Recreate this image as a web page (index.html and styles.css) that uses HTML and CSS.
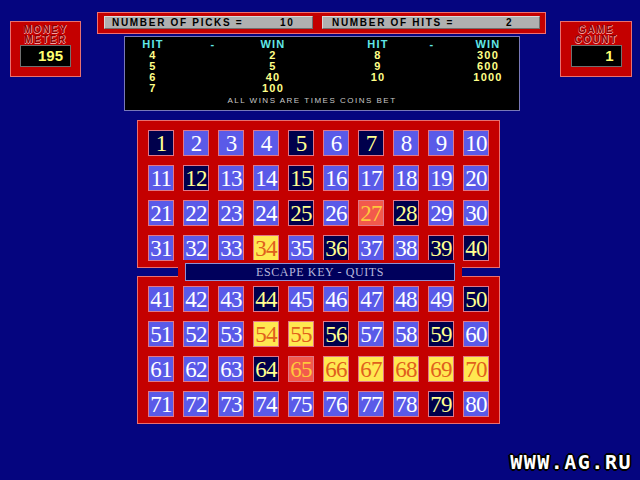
FILE: index.html
```html
<!DOCTYPE html>
<html>
<head>
<meta charset="utf-8">
<link rel="stylesheet" href="styles.css">
</head>
<body>
<div class="screen">
  <div class="top">
    <div class="meter">
      <div class="meter-label">MONEY<br>METER</div>
      <div class="meter-display">195</div>
    </div>
    <div class="center">
      <div class="status">
        <div class="status-panel picks"><span class="status-label">NUMBER OF PICKS =</span><span class="status-val">10</span></div>
        <div class="status-panel hits"><span class="status-label">NUMBER OF HITS =</span><span class="status-val">2</span></div>
      </div>
      <div class="paytable">
        <div class="pay-groups">
          <div class="pay-group left">
            <span class="ph">HIT</span><span class="ph">-</span><span class="ph">WIN</span>
            <span>4</span><span></span><span>2</span>
            <span>5</span><span></span><span>5</span>
            <span>6</span><span></span><span>40</span>
            <span>7</span><span></span><span>100</span>
          </div>
          <div class="pay-group right">
            <span class="ph">HIT</span><span class="ph">-</span><span class="ph">WIN</span>
            <span>8</span><span></span><span>300</span>
            <span>9</span><span></span><span>600</span>
            <span>10</span><span></span><span>1000</span>
          </div>
        </div>
        <div class="pay-note">ALL WINS ARE TIMES COINS BET</div>
      </div>
    </div>
    <div class="meter game">
      <div class="meter-label">GAME<br>COUNT</div>
      <div class="meter-display">1</div>
    </div>
  </div>
  <div class="board">
    <div class="panel" id="p1"></div>
    <div class="panel" id="p2"></div>
    <div class="escape"><div class="escape-bar">ESCAPE KEY - QUITS</div></div>
  </div>
  <div class="watermark">WWW.AG.RU</div>
</div>
<script src="app.js"></script>
</body>
</html>
```
FILE: app.js
```js
var dark = [1,5,7,12,15,25,28,36,39,40,44,50,56,59,64,79];
var yellow = [34,54,55,66,67,68,69,70];
var red = [27,65];
function fill(id, from) {
  var p = document.getElementById(id);
  for (var n = from; n < from + 40; n++) {
    var c = document.createElement('div');
    c.className = 'cell' + (dark.indexOf(n) >= 0 ? ' dark' : yellow.indexOf(n) >= 0 ? ' hit' : red.indexOf(n) >= 0 ? ' hot' : '');
    c.textContent = n;
    p.appendChild(c);
  }
}
fill('p1', 1);
fill('p2', 41);
```
FILE: styles.css
```css
html, body {
  margin: 0;
  padding: 0;
  background: #05057f;
}
.screen {
  position: relative;
  width: 640px;
  height: 480px;
  overflow: hidden;
  background: #05057f;
  font-family: "Liberation Sans", Arial, sans-serif;
}
.top {
  display: flex;
  align-items: flex-start;
  padding: 12px 0 0 10px;
  height: 99px;
}
.meter {
  box-sizing: border-box;
  width: 71px;
  height: 56px;
  margin-top: 9px;
  background: #c40000;
  border: 1px solid #e87070;
  display: flex;
  flex-direction: column;
  align-items: center;
}
.game {
  width: 72px;
  margin-left: 14px;
}
.meter-label {
  margin-top: 3px;
  height: 20px;
  font-size: 10px;
  line-height: 10px;
  letter-spacing: 1.5px;
  text-align: center;
  color: #8a0000;
  font-weight: bold;
  text-shadow: 1px 0 0 #f4a0a0, 0 1px 0 #f4a0a0;
}
.meter-display {
  box-sizing: border-box;
  width: 51px;
  height: 22px;
  margin-top: 0;
  background: #000;
  border: 1px solid #707070;
  color: #ffff70;
  font-weight: bold;
  font-size: 15px;
  line-height: 20px;
  text-align: right;
  padding-right: 7px;
}
.center {
  margin-left: 16px;
  width: 449px;
}
.status {
  box-sizing: border-box;
  height: 22px;
  background: #c40000;
  border: 1px solid #f07070;
  display: flex;
  gap: 9px;
  padding: 3px 5px 0 6px;
}
.status-panel {
  box-sizing: border-box;
  height: 13px;
  background: #b0b0b0;
  border: 1px solid #d8d8d8;
  border-right-color: #707070;
  border-bottom-color: #707070;
  display: flex;
  align-items: center;
  color: #000;
  font-size: 10px;
  font-weight: bold;
  letter-spacing: 1.7px;
  padding-left: 7px;
}
.picks { width: 209px; }
.hits { flex: 1; padding-left: 9px; }
.picks .status-label { width: 168px; }
.hits .status-label { width: 174px; }
.paytable {
  box-sizing: border-box;
  margin: 2px 0 0 27px;
  width: 396px;
  height: 75px;
  background: #000;
  border: 1px solid #7878b8;
  padding-top: 2px;
}
.pay-groups {
  display: flex;
}
.pay-group {
  display: grid;
  grid-auto-rows: 11px;
  font-size: 11px;
  line-height: 11px;
  font-weight: bold;
  letter-spacing: 1.2px;
  color: #ffff88;
  text-align: center;
}
.pay-group.left {
  grid-template-columns: 56px 64px 56px;
  width: 225px;
}
.pay-group.right {
  grid-template-columns: 56px 52px 60px;
}
.ph {
  color: #60e8e8;
}
.pay-note {
  margin-top: 2px;
  padding-right: 20px;
  text-align: center;
  font-size: 8px;
  letter-spacing: 1.5px;
  color: #c8c8c8;
}
.board {
  position: relative;
  margin: 9px 0 0 137px;
  width: 363px;
}
.panel {
  box-sizing: border-box;
  width: 363px;
  height: 148px;
  background: #c40000;
  border: 1px solid #e87070;
  padding: 9px 0 0 10px;
  display: grid;
  grid-template-columns: repeat(10, 26px);
  grid-auto-rows: 26px;
  gap: 9px;
}
.panel + .panel {
  margin-top: 8px;
}
.cell {
  box-sizing: border-box;
  background: #5a5ae8;
  border: 1px solid #e07888;
  color: #fff;
  font-family: "Liberation Serif", "Times New Roman", serif;
  font-size: 23px;
  line-height: 25px;
  text-align: center;
  letter-spacing: -0.8px;
  white-space: nowrap;
}
.cell.dark {
  background: #00004c;
  color: #ffff90;
}
.cell.hit {
  background: #ffe850;
  color: #e0601c;
}
.cell.hot {
  background: #f25a4c;
  color: #ffc83c;
}
.escape {
  position: absolute;
  left: 41px;
  top: 140px;
  width: 284px;
  height: 24px;
  box-sizing: border-box;
  background: #c40000;
  padding: 3px 7px;
}
.escape-bar {
  box-sizing: border-box;
  height: 18px;
  background: #00005c;
  border: 1px solid #9090d0;
  color: #b8b8dc;
  font-family: "Liberation Serif", "Times New Roman", serif;
  font-size: 12px;
  line-height: 16px;
  letter-spacing: 0.6px;
  text-align: center;
}
.watermark {
  position: absolute;
  right: 8px;
  bottom: 8px;
  font-family: "DejaVu Sans Mono", monospace;
  font-weight: bold;
  font-size: 20px;
  line-height: 20px;
  letter-spacing: 1.5px;
  color: #ffffff;
  text-shadow: 1px 1px 0 #000, -1px -1px 0 #000, 1px -1px 0 #000, -1px 1px 0 #000, 2px 0 0 #000, -2px 0 0 #000, 0 2px 0 #000, 0 -2px 0 #000;
}
```
